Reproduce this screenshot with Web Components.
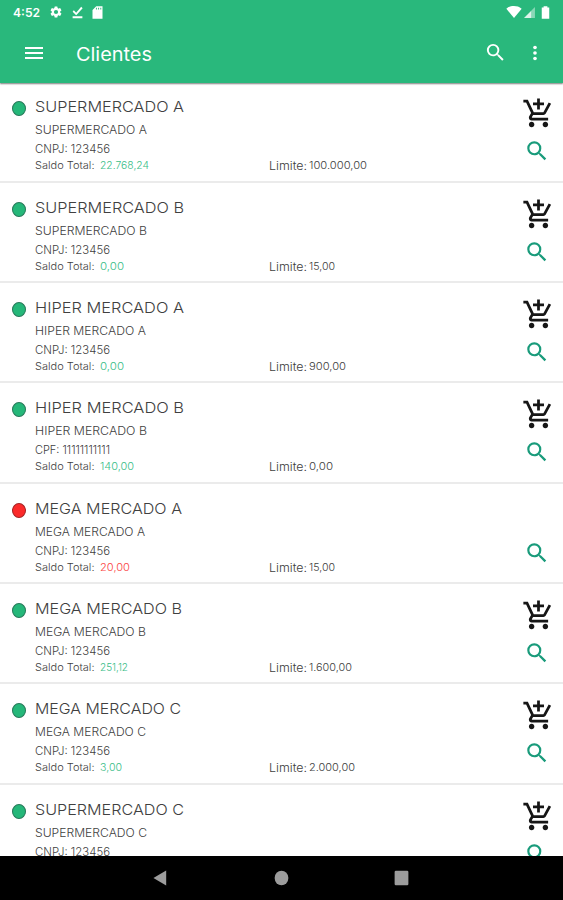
<!DOCTYPE html>
<html lang="pt-BR">
<head>
<meta charset="utf-8">
<title>Clientes</title>
<style>
    html, body { margin: 0; height: 100%; overflow: hidden; background: #fff; }
    body { font-family: Inter, "Open Sans", "Liberation Sans", sans-serif; }
</style>
</head>
<body>
<clients-app></clients-app>

<script>
const ICONS = {
    menu: '<path d="M3 18h18v-2H3v2zm0-5h18v-2H3v2zm0-7v2h18V6H3z"/>',
    search: '<path d="M15.5 14h-.79l-.28-.27A6.47 6.47 0 0 0 16 9.5 6.5 6.5 0 1 0 9.5 16c1.61 0 3.09-.59 4.23-1.57l.27.28v.79l5 4.99L20.49 19l-4.99-5zm-6 0a4.5 4.5 0 1 1 0-9 4.5 4.5 0 0 1 0 9z"/>',
    more: '<circle cx="12" cy="6" r="2"/><circle cx="12" cy="12" r="2"/><circle cx="12" cy="18" r="2"/>',
    cart: '<path d="M11 9h2V6h3V4h-3V1h-2v3H8v2h3v3zm-4 9c-1.1 0-1.99.9-1.99 2S5.9 22 7 22s2-.9 2-2-.9-2-2-2zm10 0c-1.1 0-1.99.9-1.99 2s.89 2 1.99 2 2-.9 2-2-.9-2-2-2zm-9.830-3.250l.03-.12.9-1.630h7.450c.75 0 1.410-.41 1.750-1.030l3.860-7.010L19.420 4h-.01l-1.100 2-2.760 5H8.530l-.13-.27L6.160 6l-.95-2-.94-2H1v2h2l3.600 7.590-1.350 2.450c-.16.28-.25.61-.25.960 0 1.100.9 2 2 2h12v-2H7.420c-.13 0-.25-.11-.25-.25z"/>',
    gear: '<path d="M19.140 12.940c.04-.3.06-.61.06-.940s-.02-.64-.07-.940l2.030-1.580a.5.5 0 0 0 .12-.61l-1.920-3.320a.5.5 0 0 0-.59-.22l-2.390.96a7 7 0 0 0-1.620-.94L14.400 2.810a.48.48 0 0 0-.48-.41h-3.840a.48.48 0 0 0-.47.41l-.36 2.540c-.59.24-1.130.57-1.620.94l-2.390-.96a.48.48 0 0 0-.59.22L2.740 8.870a.48.48 0 0 0 .12.610l2.030 1.580c-.05.3-.09.63-.09.940s.02.64.07.940l-2.030 1.580a.5.5 0 0 0-.12.610l1.920 3.320c.12.22.37.29.59.22l2.390-.96c.5.38 1.030.7 1.620.94l.36 2.540c.05.24.24.41.48.41h3.840c.24 0 .44-.17.470-.41l.36-2.540c.59-.24 1.130-.56 1.620-.94l2.390.96c.22.08.47 0 .59-.22l1.920-3.320a.48.48 0 0 0-.12-.61zM12 15.600a3.600 3.600 0 1 1 0-7.200 3.600 3.600 0 0 1 0 7.200z"/>',
    done: '<path d="M3 19h18v3.500H3zM3 10.500L5.200 8l4.300 4.300L18.800 1.500 21.500 4 9.600 17.300z"/>',
    sd: '<path d="M20 2H10L4 8v14h16zM11 7H9.500V4.500H11zm3.500 0H13V4.500h1.500zm3.500 0h-1.500V4.500H18z"/>',
    wifi: '<path d="M12 21L.5 7C4 4 8 3 12 3s8 1 11.500 4z"/>',
    signal: '<path d="M2 22L22 2v20z" opacity=".45"/><path d="M2 22L15 9v13z" opacity=".7"/>',
    battery: '<path d="M9 2h6v2h3v18H6V4h3z"/>',
    back: '<path d="M20 2v20L2 12z"/>',
    home: '<circle cx="12" cy="12" r="11"/>',
    recent: '<rect x="1" y="1" width="22" height="22" rx="2"/>'
};

class UiIcon extends HTMLElement {
    constructor() {
        super();
        this.attachShadow({ mode: 'open' });
    }

    connectedCallback() {
        this.shadowRoot.innerHTML = `<style>
            :host { display: block; flex: none; width: 24px; height: 24px; }
            svg { display: block; width: 100%; height: 100%; fill: currentColor; }
        </style>
        <svg viewBox="0 0 24 24" preserveAspectRatio="none">${ICONS[this.getAttribute('name')]}</svg>`;
    }
}

// Stretches its text to a given width, so the letters get wider too
class FitText extends HTMLElement {
    constructor() {
        super();
        this.attachShadow({ mode: 'open' });
        this.shadowRoot.innerHTML = `<style>
            :host { display: block; flex: none; white-space: nowrap; }
            span { display: inline-block; transform-origin: 0 50%; }
        </style><span><slot></slot></span>`;
    }

    connectedCallback() {
        const width = parseFloat(this.getAttribute('width'));
        const span = this.shadowRoot.querySelector('span');
        this.style.width = width + 'px';
        if (span.offsetWidth) {
            span.style.transform = `scaleX(${width / span.getBoundingClientRect().width})`;
        }
    }
}

class StatusBar extends HTMLElement {
    constructor() {
        super();
        this.attachShadow({ mode: 'open' });
        this.shadowRoot.innerHTML = `<style>
            :host { display: flex; align-items: center; height: 24px; color: #fff; }
            fit-text { margin-left: 13px; font-size: 12px; font-weight: 600; line-height: 24px; margin-top: 1px; }
            .gear { width: 14px; height: 14px; margin-left: 9px; }
            .done { width: 13px; height: 13px; margin-left: 7.500px; }
            .sd { width: 15px; height: 15px; margin-left: 6px; }
            .wifi { width: 16px; height: 16px; margin-left: auto; }
            .signal { width: 13px; height: 13px; margin-left: 1px; }
            .battery { width: 15px; height: 15px; margin: 0 10px 0 2px; }
        </style>
        <fit-text width="27">4:52</fit-text>
        <ui-icon name="gear" class="gear"></ui-icon>
        <ui-icon name="done" class="done"></ui-icon>
        <ui-icon name="sd" class="sd"></ui-icon>
        <ui-icon name="wifi" class="wifi"></ui-icon>
        <ui-icon name="signal" class="signal"></ui-icon>
        <ui-icon name="battery" class="battery"></ui-icon>`;
    }
}

class AppBar extends HTMLElement {
    constructor() {
        super();
        this.attachShadow({ mode: 'open' });
    }

    connectedCallback() {
        this.shadowRoot.innerHTML = `<style>
            :host { display: flex; align-items: center; height: 59px; color: #fff; }
            .menu { margin: -2px 0 0 22px; }
            fit-text { margin-left: 29.500px; font-size: 18.500px; line-height: 24px; }
            .search { width: 23px; height: 23px; margin: -2px 0 0 auto; }
            .more { width: 22px; height: 22px; margin: -1px 17px 0; }
        </style>
        <ui-icon name="menu" class="menu"></ui-icon>
        <fit-text width="76">${this.textContent}</fit-text>
        <ui-icon name="search" class="search"></ui-icon>
        <ui-icon name="more" class="more"></ui-icon>`;
    }
}

class ClientRow extends HTMLElement {
    constructor() {
        super();
        this.attachShadow({ mode: 'open' });
    }

    set client(c) {
        this.shadowRoot.innerHTML = `<style>
            :host {
                display: flex; box-sizing: border-box; height: 100.350px; flex: none;
                border-bottom: 2px solid #ebebeb; color: #404040; font-weight: 300;
            }
            .dot {
                box-sizing: border-box; width: 14px; height: 15px; margin: 19px 9px 0 12px;
                border: 1px solid #28795a; border-radius: 50%; background: #25b779; flex: none;
            }
            .dot.blocked { background: #fb2a2a; border-color: #a32626; }
            .info { flex: 1; padding-top: 15px; font-size: 11px; }
            .name { font-size: 15px; line-height: 20px; }
            .alias { line-height: 16px; margin-top: 5px; }
            .doc { line-height: 16px; margin-top: 3px; }
            .money { display: flex; font-size: 10.200px; line-height: 16px; }
            .balance { width: 168.500px; margin-left: 5.500px; color: #38bd87; }
            .blocked.balance { color: #fb4444; }
            .limit { margin-top: 1px; font-size: 11px; margin-right: 2.500px; }
            .actions { width: 33px; margin: 15px 8px 0 0; }
            .cart { width: 33px; height: 33px; color: #161616; }
            .cart.off { visibility: hidden; }
            .search { width: 26px; height: 26px; margin: 8px 0 0 2px; color: #199b7b; }
        </style>
        <div class="dot ${c.blocked ? 'blocked' : ''}"></div>
        <div class="info">
            <fit-text class="name" width="${c.w[0]}">${c.name}</fit-text>
            <fit-text class="alias" width="${c.w[1]}">${c.name}</fit-text>
            <fit-text class="doc" width="75">${c.doc}</fit-text>
            ${c.balance ? `<div class="money">
                <fit-text width="59.500">Saldo Total:</fit-text>
                <div class="balance ${c.blocked ? 'blocked' : ''}"><fit-text width="${c.w[2]}">${c.balance}</fit-text></div>
                <fit-text class="limit" width="38">Limite:</fit-text>
                <fit-text width="${c.w[3]}">${c.limit}</fit-text>
            </div>` : ''}
        </div>
        <div class="actions">
            <ui-icon name="cart" class="cart ${c.blocked ? 'off' : ''}"></ui-icon>
            <ui-icon name="search" class="search"></ui-icon>
        </div>`;
    }
}

class NavBar extends HTMLElement {
    constructor() {
        super();
        this.attachShadow({ mode: 'open' });
        this.shadowRoot.innerHTML = `<style>
            :host { display: flex; align-items: center; justify-content: center; gap: 105px; height: 44px; background: #000; color: #9c9c9c; }
            ui-icon { width: 15px; height: 16px; }
            .back { width: 17px; height: 18px; margin-left: -2px; }
        </style>
        <ui-icon name="back" class="back"></ui-icon>
        <ui-icon name="home"></ui-icon>
        <ui-icon name="recent"></ui-icon>`;
    }
}

// w: widths of name, alias, balance and limit
const CLIENTS = [
    { name: 'SUPERMERCADO A', doc: 'CNPJ: 123456', balance: '22.768,24', limit: '100.000,00', w: [149, 112, 49, 58] },
    { name: 'SUPERMERCADO B', doc: 'CNPJ: 123456', balance: '0,00', limit: '15,00', w: [149, 112, 24, 26] },
    { name: 'HIPER MERCADO A', doc: 'CNPJ: 123456', balance: '0,00', limit: '900,00', w: [149, 111, 24, 37] },
    { name: 'HIPER MERCADO B', doc: 'CPF: 11111111111', balance: '140,00', limit: '0,00', w: [149, 112, 34, 24] },
    { name: 'MEGA MERCADO A', doc: 'CNPJ: 123456', balance: '20,00', limit: '15,00', blocked: true, w: [147, 110, 30, 26] },
    { name: 'MEGA MERCADO B', doc: 'CNPJ: 123456', balance: '251,12', limit: '1.600,00', w: [147, 111, 28, 43] },
    { name: 'MEGA MERCADO C', doc: 'CNPJ: 123456', balance: '3,00', limit: '2.000,00', w: [146, 111, 22, 46] },
    { name: 'SUPERMERCADO C', doc: 'CNPJ: 123456', w: [149, 112] }
];

class ClientsApp extends HTMLElement {
    constructor() {
        super();
        this.attachShadow({ mode: 'open' });
    }

    connectedCallback() {
        this.shadowRoot.innerHTML = `<style>
            :host { display: flex; flex-direction: column; height: 100vh; }
            header { background: #29b87c; box-shadow: 0 1px 1.500px rgba(0, 0, 0, 0.5); z-index: 1; flex: none; }
            main { flex: 1; min-height: 0; margin-top: -0.700px; overflow: hidden; display: flex; flex-direction: column; }
            nav-bar { flex: none; }
        </style>
        <header><status-bar></status-bar><app-bar>Clientes</app-bar></header>
        <main></main>
        <nav-bar></nav-bar>`;
        const main = this.shadowRoot.querySelector('main');
        CLIENTS.forEach(client => {
            const row = document.createElement('client-row');
            main.appendChild(row);
            row.client = client;
        });
    }
}

customElements.define('ui-icon', UiIcon);
customElements.define('fit-text', FitText);
customElements.define('status-bar', StatusBar);
customElements.define('app-bar', AppBar);
customElements.define('client-row', ClientRow);
customElements.define('nav-bar', NavBar);
customElements.define('clients-app', ClientsApp);
</script>
</body>
</html>
